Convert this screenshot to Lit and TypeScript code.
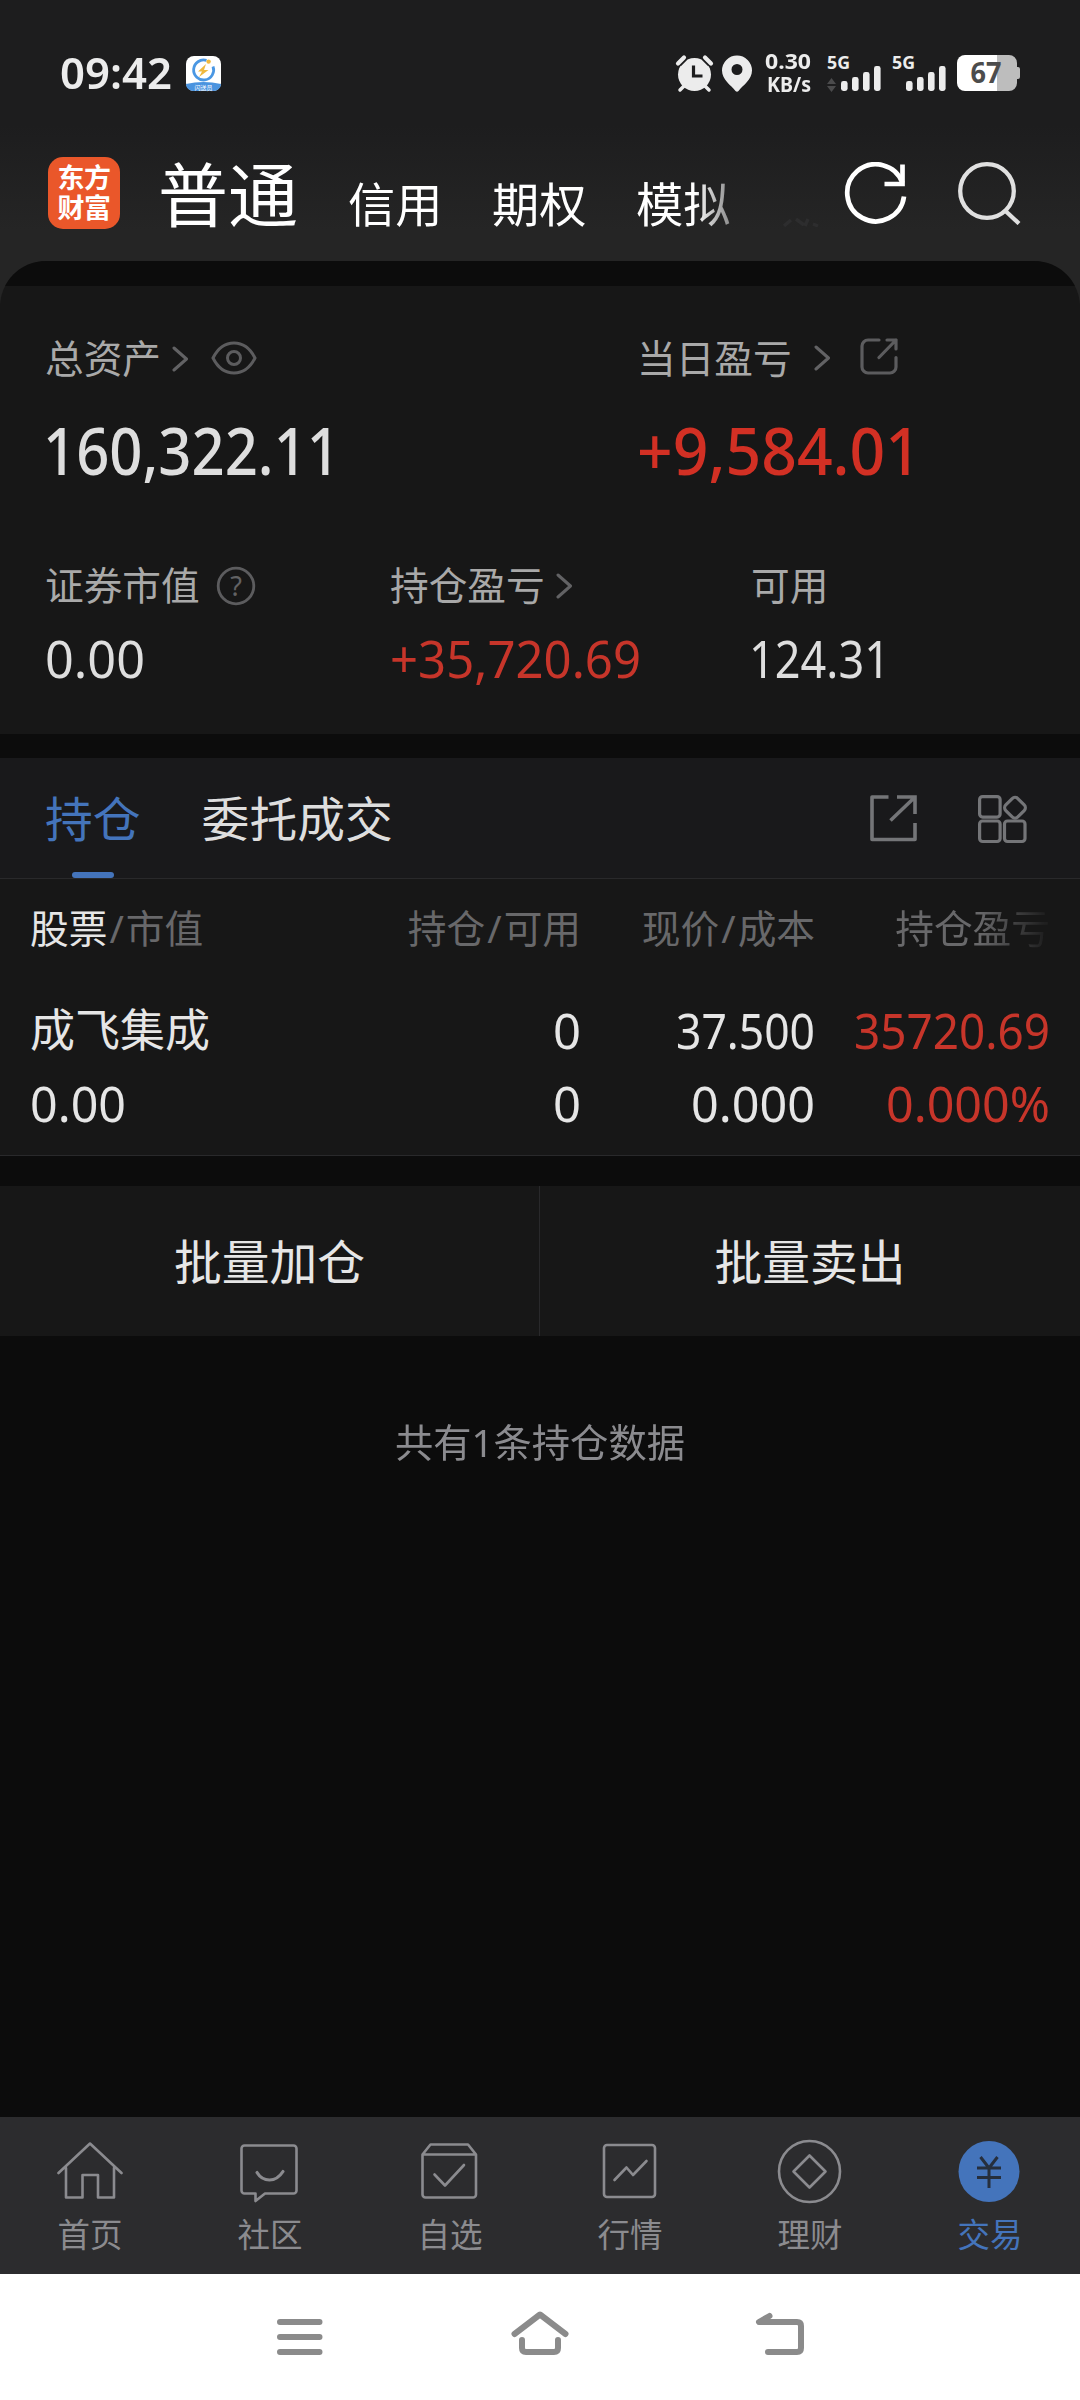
import { LitElement, html, css, svg, nothing } from "lit";
import { customElement, property, state } from "lit/decorators.js";
import { classMap } from "lit/directives/class-map.js";
import { styleMap } from "lit/directives/style-map.js";

/** One line of text whose glyphs are condensed or widened to an exact advance width. */
@customElement("fit-text")
class FitText extends LitElement {
  static styles = css`
    :host {
      display: inline-block;
      white-space: nowrap;
      text-align: left;
    }
    .glyphs {
      display: inline-block;
      transform-origin: 0 50%;
    }
  `;
  @property() text = "";
  @property({ type: Number }) width = 0;
  @state() private natural = 0;

  protected firstUpdated() {
    const el = this.renderRoot.querySelector(".glyphs") as HTMLElement;
    this.natural = el.getBoundingClientRect().width;
    this.style.width = `${this.width}px`;
  }

  render() {
    const s = this.natural ? this.width / this.natural : 1;
    return html`<span class="glyphs" style=${styleMap({ transform: `scaleX(${s})` })}>${this.text}</span>`;
  }
}

const fit = (text: string, width: number) => html`<fit-text .text=${text} .width=${width}></fit-text>`;

@customElement("status-bar")
class StatusBar extends LitElement {
  static styles = css`
    :host {
      display: flex;
      height: 125px;
      box-sizing: border-box;
      padding: 45px 60px 24px 60px;
      align-items: center;
      color: #ececec;
    }
    svg {
      display: block;
      flex: none;
      overflow: visible;
    }
    .time {
      font-size: 43px;
      font-weight: 600;
      line-height: 56px;
    }
    .badge {
      margin-left: 14px;
    }
    .right {
      display: flex;
      align-items: center;
      margin-left: auto;
    }
    .pin {
      margin-left: 9px;
    }
    .speed {
      display: flex;
      flex-direction: column;
      align-items: flex-end;
      margin: 0 16px 0 13px;
      font-weight: 700;
      font-size: 21px;
      line-height: 23px;
    }
    .net {
      width: 55px;
      height: 38px;
      margin-right: 10px;
    }
    .g5 {
      font-size: 18.5px;
      font-weight: 700;
      fill: #ececec;
    }
    .level {
      font-size: 28px;
      font-weight: 700;
      fill: #4c4c4c;
    }
    .tiny {
      font-size: 6px;
      fill: #fff;
    }
  `;

  private signal(data: boolean) {
    const bars = [
      [14, 27],
      [25, 23],
      [36, 18],
      [47, 12],
    ];
    return html`<svg class="net" viewBox="0 0 55 38">
      <text class="g5" x="0" y="15" textLength="23" lengthAdjust="spacingAndGlyphs">5G</text>
      ${bars.map(([x, y]) => svg`<rect x=${x} y=${y} width="6.6" height=${37 - y} rx="2.4" fill="#ececec"/>`)}
      ${data ? svg`<path d="M0 30l4.5-6 4.5 6zM0 32h9l-4.5 6z" fill="#4b4b4c"/>` : nothing}
    </svg>`;
  }

  render() {
    return html`
      <span class="time">${fit("09:42", 112)}</span>
      <svg class="badge" width="35" height="35" viewBox="0 0 35 35">
        <rect width="35" height="35" rx="8" fill="#fff" />
        <path d="M0 28q17.500-4 35 0a7.500 7 0 0 1-7.500 7H7.500A7.500 7 0 0 1 0 28z" fill="#4a93df" />
        <path d="M20.500 4.400A10 10 0 1 0 27 10.500" fill="none" stroke="#4a97e3" stroke-width="2.800" />
        <circle cx="22.600" cy="5.600" r="2.200" fill="#efb93f" />
        <path d="M20 8l-8 7.500h4l-3 5.500 9.500-7h-4.500z" fill="#efb93f" />
        <text class="tiny" x="8.500" y="33.500">闪送员</text>
      </svg>
      <div class="right">
        <svg width="37" height="37" viewBox="0 0 37 37">
          <circle cx="18.500" cy="19.500" r="16.500" fill="#ececec" />
          <path d="M2 8.500l6-6M35 8.500l-6-6" stroke="#1d1d1e" stroke-width="8" />
          <path d="M2 8.500l6-6M35 8.500l-6-6" stroke="#ececec" stroke-width="4.200" stroke-linecap="round" />
          <path d="M4 35l5-5M33 35l-5-5" stroke="#ececec" stroke-width="3.500" stroke-linecap="round" />
          <path d="M17.500 10.500v10.500h9" fill="none" stroke="#1d1d1e" stroke-width="3.200" />
        </svg>
        <svg class="pin" width="30" height="37" viewBox="0 0 30 37">
          <path
            fill-rule="evenodd"
            fill="#ececec"
            d="M15 .5A15 15 0 0 0 0 15.500C0 25 9 30 13.500 36q1.500 1.500 3 0C21 30 30 25 30 15.500A15 15 0 0 0 15 .5zM15 9a5.500 5.500 0 1 1 0 11 5.500 5.500 0 0 1 0-11z"
          />
        </svg>
        <div class="speed"><span>${fit("0.30", 46)}</span><span>${fit("KB/s", 44)}</span></div>
        ${this.signal(true)} ${this.signal(false)}
        <svg width="63" height="36" viewBox="0 0 63 36">
          <path d="M8 0h32v36H8a8 8 0 0 1-8-8V8a8 8 0 0 1 8-8z" fill="#fff" />
          <path d="M40 0h12a8 8 0 0 1 8 8v4h1q2 0 2 2v8q0 2-2 2h-1v4a8 8 0 0 1-8 8H40z" fill="#bdbdbd" />
          <text class="level" x="13.500" y="28" textLength="31" lengthAdjust="spacingAndGlyphs">67</text>
        </svg>
      </div>
    `;
  }
}

@customElement("account-header")
class AccountHeader extends LitElement {
  static styles = css`
    :host {
      display: flex;
      height: 136px;
      box-sizing: border-box;
      padding: 32px 58px 0 48px;
      color: #fff;
    }
    svg {
      display: block;
      flex: none;
    }
    .logo {
      width: 72px;
      height: 72px;
      border-radius: 15px;
      background: #ea572a;
      display: flex;
      flex-direction: column;
      align-items: center;
      justify-content: center;
      font-size: 27px;
      line-height: 30px;
      font-weight: 700;
      letter-spacing: -0.5px;
      flex: none;
    }
    .tabs {
      display: flex;
      align-items: baseline;
      margin: 1px 0 0 38px;
      width: 587px;
      height: 80px;
      overflow: hidden;
      white-space: nowrap;
      -webkit-mask-image: linear-gradient(90deg, #000 536px, rgba(0, 0, 0, 0.45) 574px, transparent 587px);
      mask-image: linear-gradient(90deg, #000 536px, rgba(0, 0, 0, 0.45) 574px, transparent 587px);
    }
    .tab {
      font-size: 47px;
      line-height: 74px;
      margin-right: 49.500px;
    }
    .tab.current {
      font-size: 70px;
      margin-right: 50px;
    }
    .rest {
      margin: 61px 0 0 38px;
    }
    .refresh {
      margin: 5px 0 0 24px;
    }
    .search {
      margin: 4px 0 0 50px;
    }
  `;

  render() {
    return html`
      <div class="logo"><span>东方</span><span>财富</span></div>
      <div class="tabs">
        <span class="tab current">${fit("普通", 140)}</span>
        <span class="tab">${fit("信用", 94.5)}</span>
        <span class="tab">${fit("期权", 94.5)}</span>
        <span class="tab">${fit("模拟", 94.5)}</span>
      </div>
      <svg class="rest" width="36" height="9" viewBox="0 0 36 9" fill="none" stroke="#2d2d2e" stroke-width="3.500">
        <path d="M1 8l7-6M13 1l8 6M25 1l-3 7M30 6l5 2" />
      </svg>
      <svg class="refresh" width="64" height="64" viewBox="0 0 64 64" fill="none" stroke="#fff" stroke-width="4.700">
        <path d="M59.500 21A28.500 28.500 0 1 0 61 34.500" />
        <path d="M59.500 2.500v19.500H41.500" />
      </svg>
      <svg class="search" width="64" height="64" viewBox="0 0 64 64" fill="none" stroke="#e0e0e0" stroke-width="4.300">
        <circle cx="30" cy="30" r="26.800" />
        <path d="M48.500 50L62 62.500" />
      </svg>
    `;
  }
}

const chevron = html`<svg class="chev" width="17" height="28" viewBox="0 0 17 28" fill="none" stroke="#626264" stroke-width="3" stroke-linecap="round" stroke-linejoin="round"><path d="M2 3l12.500 11L2 25" /></svg>`;

@customElement("asset-summary")
class AssetSummary extends LitElement {
  static styles = css`
    :host {
      display: block;
      height: 473px;
      box-sizing: border-box;
      border-top: 25px solid #0c0c0c;
      background: #171717;
      padding: 47px 0 0 45px;
    }
    svg {
      display: block;
      flex: none;
    }
    .top {
      display: grid;
      grid-template-columns: 592px 1fr;
    }
    .bottom {
      display: grid;
      grid-template-columns: 345px 361px 1fr;
      margin-top: 75px;
    }
    .label {
      display: flex;
      align-items: center;
      height: 50px;
      font-size: 38.700px;
      line-height: 50px;
      color: #a9a9a9;
    }
    .chev {
      margin: 2px 0 0 11px;
    }
    .chev-wide .chev {
      margin: -1px 0 0 22px;
    }
    .eye {
      margin-left: 22px;
    }
    .share {
      margin: -2px 0 0 29px;
    }
    .help {
      margin: 2px 0 0 16px;
    }
    .help text {
      font-size: 27px;
      fill: #626264;
    }
    .value {
      margin-top: 32px;
      height: 70px;
      line-height: 70px;
      font-size: 64.500px;
      font-weight: 500;
      color: #dedede;
    }
    .value.total {
      padding-left: -1px;
      margin-left: -2px;
    }
    .small {
      margin-top: 18px;
      height: 60px;
      line-height: 60px;
      font-size: 51.500px;
      font-weight: 400;
    }
    .cash {
      margin-left: -2px;
    }
    .up {
      color: #d23024;
    }
    .small.up {
      color: #c7352a;
    }
  `;

  render() {
    return html`
      <div class="top">
        <div>
          <div class="label">
            <span>总资产</span>${chevron}
            <svg class="eye" width="46" height="34" viewBox="0 0 46 34" fill="none" stroke="#5c5c5e" stroke-width="3">
              <path d="M2 17C7 7 14.500 2 23 2s16 5 21 15c-5 10-12.500 15-21 15S7 27 2 17z" />
              <circle cx="23" cy="17" r="6.500" />
            </svg>
          </div>
          <div class="value total">${fit("160,322.11", 297)}</div>
        </div>
        <div>
          <div class="label chev-wide">
            <span>当日盈亏</span>${chevron}
            <svg class="share" width="38" height="38" viewBox="0 0 38 38" fill="none" stroke="#5c5c5e" stroke-width="3.200" stroke-linecap="round" stroke-linejoin="round">
              <path d="M19 2H8a6 6 0 0 0-6 6v21a6 6 0 0 0 6 6h22a6 6 0 0 0 6-6V19.500" />
              <path d="M27 2h9v9M36 2L19 19.500" />
            </svg>
          </div>
          <div class="value up">${fit("+9,584.01", 284)}</div>
        </div>
      </div>
      <div class="bottom">
        <div>
          <div class="label">
            <span>证券市值</span>
            <svg class="help" width="40" height="40" viewBox="0 0 40 40">
              <circle cx="20" cy="20" r="17.800" fill="none" stroke="#5c5c5e" stroke-width="2.800" />
              <text x="20" y="29.500" text-anchor="middle">?</text>
            </svg>
          </div>
          <div class="value small">${fit("0.00", 100)}</div>
        </div>
        <div>
          <div class="label"><span>持仓盈亏</span>${chevron}</div>
          <div class="value small up">${fit("+35,720.69", 251)}</div>
        </div>
        <div>
          <div class="label">可用</div>
          <div class="value small cash">${fit("124.31", 141)}</div>
        </div>
      </div>
    `;
  }
}

interface Holding {
  name: string;
  cells: [string, number, boolean][][];
}

@customElement("holdings-panel")
class HoldingsPanel extends LitElement {
  static styles = css`
    :host {
      display: block;
    }
    svg {
      display: block;
      flex: none;
    }
    .tabs {
      display: flex;
      height: 121px;
      box-sizing: border-box;
      border-bottom: 1px solid #29292b;
      padding: 0 52px 0 45px;
      background: #19191b;
      color: #dedede;
      font-size: 47.800px;
      line-height: 122px;
    }
    .tab {
      display: flex;
      flex-direction: column;
      align-items: center;
      height: 120px;
      margin-right: 61px;
    }
    .tab.current {
      color: #4474bb;
    }
    .bar {
      width: 42px;
      height: 6px;
      border-radius: 3px;
      margin: -8px 0 0 0;
      background: #4474bb;
    }
    .share {
      margin: 36px 0 0 auto;
    }
    .grid {
      margin: 36px 0 0 61px;
    }
    .table {
      background: #171717;
      height: 277px;
      box-sizing: border-box;
      padding: 24px 0 0 30px;
      border-bottom: 1px solid #29292b;
      color: #e6e6e6;
    }
    .row {
      display: grid;
      grid-template-columns: 329px 222px 234px 235px;
      text-align: right;
      font-size: 49px;
      line-height: 60px;
      height: 60px;
    }
    .row > :first-child {
      text-align: left;
    }
    .head {
      font-size: 38.700px;
      line-height: 50px;
      height: 50px;
      margin-bottom: 47px;
      color: #68686a;
      white-space: nowrap;
    }
    .head b {
      font-weight: 400;
      color: #e6e6e6;
    }
    .slash {
      margin: 0 2px;
    }
    .fade {
      -webkit-mask-image: linear-gradient(90deg, #000 165px, rgba(0, 0, 0, 0.1) 230px);
      mask-image: linear-gradient(90deg, #000 165px, rgba(0, 0, 0, 0.1) 230px);
    }
    .second {
      margin-top: 13px;
    }
    .name {
      font-size: 45px;
    }
    .up {
      color: #c7352a;
    }
  `;

  private holding: Holding = {
    name: "成飞集成",
    cells: [
      [
        ["0", 28, false],
        ["37.500", 139, false],
        ["35720.69", 196, true],
      ],
      [
        ["0", 28, false],
        ["0.000", 124, false],
        ["0.000%", 164, true],
      ],
    ],
  };

  private cells(row: [string, number, boolean][]) {
    return row.map(([t, w, up]) => html`<span class=${classMap({ up })}>${fit(t, w)}</span>`);
  }

  render() {
    return html`
      <div class="tabs">
        <div class="tab current"><span>持仓</span><span class="bar"></span></div>
        <div class="tab"><span>委托成交</span></div>
        <svg class="share" width="47" height="48" viewBox="0 0 47 48" fill="none" stroke="#747578" stroke-width="3.600" stroke-linejoin="round">
          <path d="M18.500 3H2v42.500h43V29" />
          <path d="M27 3h18v17M45 3L20.500 26.500" stroke-linejoin="miter" />
        </svg>
        <svg class="grid" width="50" height="50" viewBox="0 0 50 50" fill="none" stroke="#747578" stroke-width="3.200">
          <rect x="1.600" y="2.600" width="20.500" height="20.500" rx="3" />
          <rect x="1.600" y="27" width="20.500" height="20.500" rx="3" />
          <rect x="26.500" y="27" width="20.500" height="20.500" rx="3" />
          <rect x="28.500" y="5.200" width="17" height="17" rx="4" transform="rotate(45 37 13.700)" />
        </svg>
      </div>
      <div class="table">
        <div class="row head">
          <span><b>股票</b><span class="slash">/</span>市值</span>
          <span>持仓<span class="slash">/</span>可用</span>
          <span>现价<span class="slash">/</span>成本</span>
          <span class="fade">持仓盈亏</span>
        </div>
        <div class="row"><span class="name">${this.holding.name}</span>${this.cells(this.holding.cells[0])}</div>
        <div class="row second"><span>${fit("0.00", 96)}</span>${this.cells(this.holding.cells[1])}</div>
      </div>
    `;
  }
}

@customElement("tab-bar")
class TabBar extends LitElement {
  static styles = css`
    :host {
      display: grid;
      grid-template-columns: repeat(6, 1fr);
      height: 157px;
      background: #2c2c2e;
      color: #8b8b8f;
      font-size: 32.500px;
      line-height: 44px;
    }
    .item {
      display: flex;
      flex-direction: column;
      align-items: center;
      padding-top: 22px;
    }
    .item svg {
      display: block;
      margin-bottom: 8px;
    }
    .active {
      color: #4474bb;
    }
  `;

  private items = [
    { label: "首页", icon: svg`<path d="M1.500 34L33 4.500 64.500 34M9 29v29.500h16.500V36H41v22.500h16V29"/>` },
    {
      label: "社区",
      icon: svg`<path d="M7.500 6.500h49a3 3 0 0 1 3 3v42a3 3 0 0 1-3 3H28l-9.500 7.500v-7.500h-11a3 3 0 0 1-3-3v-42a3 3 0 0 1 3-3z"/><path d="M20 33.500q4.500 7.500 12.500 7.500T46 32.500" stroke-width="3.200"/>`,
    },
    {
      label: "自选",
      icon: svg`<path d="M5.500 15.500l8-10h37.500l8 10v40a3 3 0 0 1-3 3H8.500a3 3 0 0 1-3-3zM5.500 15.500h53.500"/><path d="M17.500 35.500l10.500 11 19-20.500"/>`,
    },
    {
      label: "行情",
      icon: svg`<rect x="7" y="6" width="51" height="52" rx="3"/><path d="M17.500 41l12-12.500 6.500 7.500 13.500-14"/>`,
    },
    {
      label: "理财",
      icon: svg`<circle cx="32.500" cy="32.500" r="30.500"/><path d="M32.500 16.500l16 16-16 16-16-16z"/>`,
    },
    {
      label: "交易",
      active: true,
      icon: svg`<circle cx="32" cy="32.500" r="30.500" fill="#4474bb" stroke="none"/><path d="M23.500 18L32 29l8.500-11M20 29h24M20 38.500h24M32 29v20" stroke="#262f3d" stroke-width="3" stroke-linecap="butt"/>`,
    },
  ];

  render() {
    return this.items.map(
      (i) => html`<div class="item ${i.active ? "active" : ""}">
        <svg width="66" height="66" viewBox="0 0 66 66" fill="none" stroke="#8b8b8f" stroke-width="2.600" stroke-linejoin="round" stroke-linecap="round">${i.icon}</svg>
        <span>${i.label}</span>
      </div>`
    );
  }
}

@customElement("app-root")
class AppRoot extends LitElement {
  static styles = css`
    :host {
      display: flex;
      flex-direction: column;
      width: 1080px;
      height: 2400px;
      overflow: hidden;
      background: #0c0c0c;
      font-family: "Noto Sans", "Noto Sans CJK SC", sans-serif;
    }
    .top {
      background: linear-gradient(#1d1d1e 0 125px, #252525 230px);
    }
    .panel {
      border-radius: 46px 46px 0 0;
      overflow: hidden;
    }
    .gap {
      height: 24px;
    }
    .actions {
      display: grid;
      grid-template-columns: 539px 1fr;
      height: 150px;
      margin-top: 30px;
      background: #171717;
      color: #e6e6e6;
      font-size: 47.800px;
      line-height: 152px;
      text-align: center;
      overflow: hidden;
    }
    .actions > :last-child {
      border-left: 1px solid #29292b;
    }
    .total {
      margin-top: 81px;
      line-height: 50px;
      font-size: 38.700px;
      color: #8b8b8f;
      text-align: center;
    }
    .fill {
      flex: 1;
    }
    .system {
      display: grid;
      grid-template-columns: 64px 64px 64px;
      column-gap: 176px;
      justify-content: center;
      height: 126px;
      box-sizing: border-box;
      padding-top: 33px;
      background: #fff;
    }
    .system svg {
      display: block;
    }
  `;

  render() {
    return html`
      <div class="top">
        <status-bar></status-bar>
        <account-header></account-header>
        <div class="panel"><asset-summary></asset-summary></div>
      </div>
      <div class="gap"></div>
      <holdings-panel></holdings-panel>
      <div class="actions"><span>批量加仓</span><span>批量卖出</span></div>
      <div class="total">${fit("共有1条持仓数据", 290)}</div>
      <div class="fill"></div>
      <tab-bar></tab-bar>
      <div class="system">
        <svg width="64" height="54" viewBox="0 0 64 54" stroke="#8b8b8b" stroke-width="6" stroke-linecap="round">
          <path d="M12 15h39.500M12 30h39.500M12 45h39.500" />
        </svg>
        <svg width="64" height="54" viewBox="0 0 64 54" fill="none" stroke="#8b8b8b" stroke-width="6" stroke-linecap="round" stroke-linejoin="round">
          <path d="M6.500 27L32 7.500 57.500 27M14 33v8q0 4 4 4h28q4 0 4-4v-8" />
        </svg>
        <svg width="64" height="54" viewBox="0 0 64 54" fill="none" stroke="#8b8b8b" stroke-width="6" stroke-linecap="round" stroke-linejoin="round">
          <path d="M21.500 9L11 15h38q4 0 4 4v22q0 4-4 4H20" />
        </svg>
      </div>
    `;
  }
}
